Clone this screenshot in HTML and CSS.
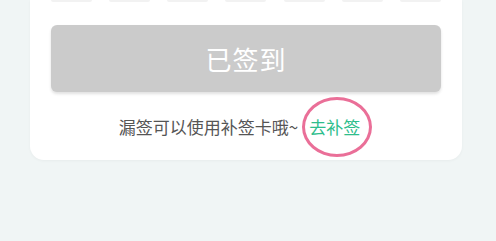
FILE: index.html
```html
<!DOCTYPE html>
<html lang="zh">
<head>
<meta charset="utf-8">
<link rel="stylesheet" href="styles.css">
</head>
<body>
<div class="card">
  <div class="days">
    <span class="day"></span><span class="day"></span><span class="day"></span><span class="day"></span><span class="day"></span><span class="day"></span><span class="day"></span>
  </div>
  <button class="btn">已签到</button>
  <div class="tip">
    <span class="tip-text">漏签可以使用补签卡哦~</span>
    <span class="link">去补签</span>
  </div>
</div>
</body>
</html>
```
FILE: styles.css
```css
html, body {
  margin: 0;
  padding: 0;
}
body {
  background: #f0f5f5;
  width: 496px;
  height: 241px;
  overflow: hidden;
  font-family: "Noto Sans CJK SC", "Noto Sans", sans-serif;
}
.card {
  margin-left: 30px;
  width: 432px;
  box-sizing: border-box;
  background: #ffffff;
  border-radius: 0 0 14px 14px;
  padding: 0 21px 21px 21px;
  box-shadow: 0 1px 3px rgba(0, 0, 0, 0.04);
}
.days {
  display: flex;
  justify-content: space-between;
  height: 2px;
}
.day {
  width: 41px;
  height: 2px;
  background: #f2f2f2;
  border-radius: 0 0 2px 2px;
}
.btn {
  display: block;
  width: 100%;
  height: 67px;
  margin-top: 23px;
  border: none;
  border-radius: 6px;
  background: #cbcbcb;
  color: #ffffff;
  font-family: "Noto Sans CJK SC", "Noto Sans", sans-serif;
  font-size: 26px;
  letter-spacing: 1px;
  box-shadow: 0 2px 3px rgba(0, 0, 0, 0.12);
  padding: 0;
}
.tip {
  display: flex;
  justify-content: center;
  align-items: center;
  margin-top: 23px;
  height: 24px;
  padding-right: 13px;
  font-size: 17px;
  line-height: 24px;
}
.tip-text {
  color: #555555;
}
.link {
  position: relative;
  display: inline-block;
  margin-left: 11px;
  color: #2ebd8c;
  line-height: 24px;
}
.link::after {
  content: "";
  position: absolute;
  left: -7px;
  top: -18px;
  width: 70px;
  height: 60px;
  box-sizing: border-box;
  border: 3px solid #ea6f98;
  border-radius: 50%;
}
```
